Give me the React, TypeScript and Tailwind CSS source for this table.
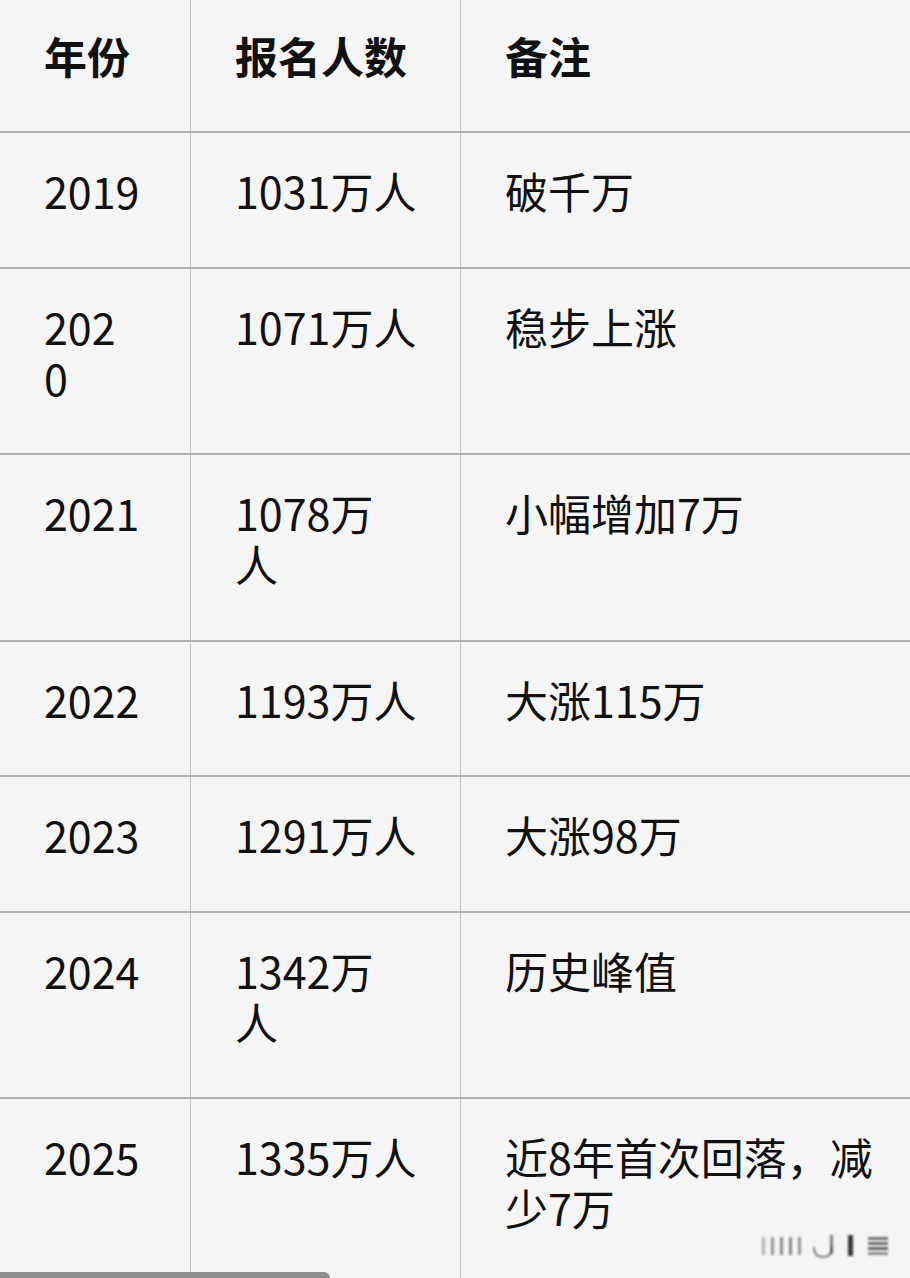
import React from 'react';

type Row = {
  year: React.ReactNode;
  count: React.ReactNode;
  note: React.ReactNode;
};

const rows: Row[] = [
  { year: '2019', count: '1031万人', note: '破千万' },
  { year: <>202<br />0</>, count: '1071万人', note: '稳步上涨' },
  { year: '2021', count: <>1078万<br />人</>, note: '小幅增加7万' },
  { year: '2022', count: '1193万人', note: '大涨115万' },
  { year: '2023', count: '1291万人', note: '大涨98万' },
  { year: '2024', count: <>1342万<br />人</>, note: '历史峰值' },
  { year: '2025', count: '1335万人', note: <>近8年首次回落，减<br />少7万</> },
];

function Watermark() {
  // blurred app watermark in the corner
  return (
    <svg width="134" height="30" viewBox="0 0 134 30" className="absolute right-[18px] bottom-[17px]">
      <defs>
        <filter id="wm-blur" x="-20%" y="-20%" width="140%" height="140%">
          <feGaussianBlur stdDeviation="1.1" />
        </filter>
      </defs>
      <g filter="url(#wm-blur)" fill="#222">
        <rect x="4" y="6" width="3" height="18" opacity="0.3" />
        <rect x="13" y="6" width="3" height="18" opacity="0.45" />
        <rect x="22" y="6" width="3" height="18" opacity="0.5" />
        <rect x="31" y="6" width="3" height="18" opacity="0.5" />
        <rect x="40" y="6" width="3" height="18" opacity="0.45" />
        <path d="M56 16 Q56 26 65 26 Q74 26 74 16" stroke="#222" strokeWidth="2" fill="none" opacity="0.55" />
        <rect x="72" y="4" width="3" height="19" opacity="0.55" />
        <rect x="90" y="4" width="5" height="21" opacity="0.9" />
        <rect x="110" y="6" width="20" height="3" opacity="0.6" />
        <rect x="110" y="11" width="20" height="3" opacity="0.65" />
        <rect x="110" y="16" width="20" height="3" opacity="0.7" />
        <rect x="110" y="21" width="20" height="3" opacity="0.5" />
      </g>
    </svg>
  );
}

export default function App() {
  const cell = 'pl-[44px] pr-2 leading-[51px]';

  return (
    <div
      className="relative h-[1278px] w-[910px] overflow-hidden bg-[#f5f5f5] text-[43px] text-[#111]"
      style={{ fontFamily: '"Noto Sans CJK SC", "Noto Sans", sans-serif' }}
    >
      <div className="grid grid-cols-[190px_270px_1fr] font-bold">
        <div className={`${cell} pt-[30px] pb-[50px] pl-[43px]`}>年份</div>
        <div className={`${cell} pt-[30px] pb-[50px] border-l border-[#c4c4c4]`}>报名人数</div>
        <div className={`${cell} pt-[30px] pb-[50px] border-l border-[#c4c4c4]`}>备注</div>
      </div>

      {rows.map((r, i) => (
        <div key={i} className="grid grid-cols-[190px_270px_1fr] border-t-2 border-[#b0b0b0]">
          <div className={`${cell} pt-[32px] pb-[50.5px] pl-[43px]`}>{r.year}</div>
          <div className={`${cell} pt-[32px] pb-[50.5px] border-l border-[#c4c4c4]`}>{r.count}</div>
          <div className={`${cell} pt-[32px] pb-[50.5px] border-l border-[#c4c4c4]`}>{r.note}</div>
        </div>
      ))}

      <Watermark />

      {/* horizontal scrollbar */}
      <div className="absolute bottom-0 left-0 h-[6px] w-[330px] rounded-tr-[6px] bg-[#8e8e8e]" />
    </div>
  );
}
